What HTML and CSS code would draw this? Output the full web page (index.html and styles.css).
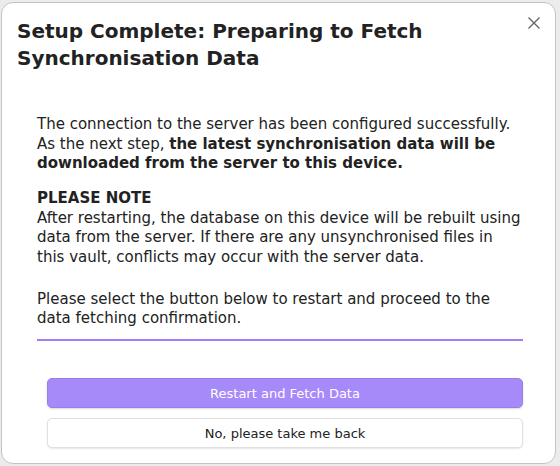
FILE: index.html
```html
<!DOCTYPE html>
<html>
<head>
<meta charset="utf-8">
<link rel="stylesheet" href="styles.css">
</head>
<body>
<div class="modal">
  <button class="close" aria-label="Close">
    <svg width="14" height="14" viewBox="0 0 14 14"><path d="M1.5 1.5 L12.5 12.5 M12.5 1.5 L1.5 12.5" stroke="#666" stroke-width="1.4" fill="none"/></svg>
  </button>
  <h1 class="title">Setup Complete: Preparing to Fetch Synchronisation Data</h1>
  <div class="content">
    <p class="para">The connection to the server has been configured successfully. As the next step, <strong>the latest synchronisation data will be downloaded from the server to this device.</strong></p>
    <p class="para note"><strong>PLEASE NOTE</strong><br>After restarting, the database on this device will be rebuilt using data from the server. If there are any unsynchronised files in this vault, conflicts may occur with the server data.</p>
    <p class="para last">Please select the button below to restart and proceed to the data fetching confirmation.</p>
    <div class="divider"></div>
  </div>
  <div class="actions">
    <button class="btn primary">Restart and Fetch Data</button>
    <button class="btn secondary">No, please take me back</button>
  </div>
</div>
</body>
</html>
```
FILE: styles.css
```css
html, body {
  margin: 0;
  padding: 0;
}
body {
  background: #ececec;
  padding: 2px 4px 2px 1px;
  font-family: "DejaVu Sans", sans-serif;
  color: #222;
}
.modal {
  position: relative;
  box-sizing: border-box;
  height: 462px;
  background: #fff;
  border: 1px solid #c4c4c4;
  border-radius: 12px;
  padding: 15px 16px 0 15px;
}
.close {
  position: absolute;
  top: 13px;
  right: 14px;
  width: 14px;
  height: 14px;
  padding: 0;
  border: none;
  background: none;
  display: flex;
}
.title {
  margin: 0;
  font-size: 20px;
  font-weight: bold;
  line-height: 27px;
  width: 460px;
}
.content {
  padding: 43px 16px 0 20px;
}
.para {
  margin: 0;
  font-size: 15px;
  line-height: 19.5px;
}
.note {
  margin-top: 15.5px;
}
.last {
  margin-top: 22.5px;
}
.divider {
  height: 2px;
  background: #a07ef5;
  margin-top: 10.5px;
}
.actions {
  display: flex;
  flex-direction: column;
  gap: 10px;
  padding: 37px 16px 0 30px;
}
.btn {
  height: 30px;
  border-radius: 5px;
  font-family: "DejaVu Sans", sans-serif;
  font-size: 13px;
  padding: 0;
  cursor: pointer;
}
.primary {
  background: #a68af9;
  color: #fff;
  border: 1px solid #9b7de8;
  box-shadow: 0 1px 2px rgba(0,0,0,0.15);
}
.secondary {
  background: #fff;
  color: #222;
  border: 1px solid #e0e0e0;
  box-shadow: 0 1px 2px rgba(0,0,0,0.1);
}
```
